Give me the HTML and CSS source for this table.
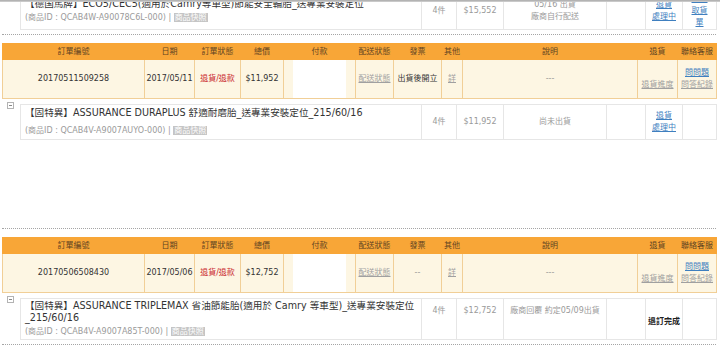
FILE: index.html
```html
<!DOCTYPE html>
<html lang="zh-Hant">
<head>
<meta charset="utf-8">
<title>訂單查詢</title>
<link rel="stylesheet" href="styles.css">
</head>
<body>
<div class="topbar"></div>
<div class="page">

  <section class="order order-first">
    <div class="item">
      <span class="toggle"></span>
      <table class="items">
        <colgroup><col class="c-prod"><col class="c-qty"><col class="c-price"><col class="c-ship"><col class="c-empty"><col class="c-ret"><col class="c-last"></colgroup>
        <tr>
          <td class="prod">
            <div class="title">【德国馬牌】ECO5/CEC5(適用於Camry等車型)節能安全輪胎_送專業安裝定位</div>
            <div class="pid">(商品ID : QCAB4W-A90078C6L-000) | <span class="badge">商品快照</span></div>
          </td>
          <td>4件</td>
          <td>$15,552</td>
          <td>05/16 出貨<br>廠商自行配送</td>
          <td></td>
          <td><a class="lnk">退貨<br>處理中</a></td>
          <td><a class="lnk">取消<br>取貨<br>單</a></td>
        </tr>
      </table>
    </div>
    <div class="sep"></div>
  </section>

  <section class="order">
    <table class="orders">
      <colgroup><col class="o1"><col class="o2"><col class="o3"><col class="o4"><col class="o5"><col class="o6"><col class="o7"><col class="o8"><col class="o9"><col class="o10"><col class="o11"></colgroup>
      <tr class="head">
        <th>訂單編號</th><th>日期</th><th>訂單狀態</th><th>總價</th><th>付款</th><th>配送狀態</th><th>發票</th><th>其他</th><th>說明</th><th>退貨</th><th>聯絡客服</th>
      </tr>
      <tr class="data">
        <td>20170511509258</td>
        <td>2017/05/11</td>
        <td class="red">退貨/退款</td>
        <td>$11,952</td>
        <td class="pay"></td>
        <td><a class="glnk">配送狀態</a></td>
        <td>出貨後開立</td>
        <td><a class="glnk">詳</a></td>
        <td class="muted">---</td>
        <td class="low"><a class="glnk">退貨進度</a></td>
        <td><a class="lnk">問問題</a><br><a class="glnk">問答紀錄</a></td>
      </tr>
    </table>
    <div class="item item-gap">
      <span class="toggle"></span>
      <table class="items">
        <colgroup><col class="c-prod"><col class="c-qty"><col class="c-price"><col class="c-ship"><col class="c-empty"><col class="c-ret"><col class="c-last"></colgroup>
        <tr>
          <td class="prod">
            <div class="title">【固特異】ASSURANCE DURAPLUS 舒適耐磨胎_送專業安裝定位_215/60/16</div>
            <div class="pid">(商品ID : QCAB4V-A9007AUYO-000) | <span class="badge">商品快照</span></div>
          </td>
          <td>4件</td>
          <td>$11,952</td>
          <td>尚未出貨</td>
          <td></td>
          <td><a class="lnk">退貨<br>處理中</a></td>
          <td></td>
        </tr>
      </table>
    </div>
    <div class="spacer"></div>
    <div class="sep"></div>
  </section>

  <section class="order">
    <table class="orders">
      <colgroup><col class="o1"><col class="o2"><col class="o3"><col class="o4"><col class="o5"><col class="o6"><col class="o7"><col class="o8"><col class="o9"><col class="o10"><col class="o11"></colgroup>
      <tr class="head">
        <th>訂單編號</th><th>日期</th><th>訂單狀態</th><th>總價</th><th>付款</th><th>配送狀態</th><th>發票</th><th>其他</th><th>說明</th><th>退貨</th><th>聯絡客服</th>
      </tr>
      <tr class="data">
        <td>20170506508430</td>
        <td>2017/05/06</td>
        <td class="red">退貨/退款</td>
        <td>$12,752</td>
        <td class="pay"></td>
        <td><a class="glnk">配送狀態</a></td>
        <td class="muted">--</td>
        <td><a class="glnk">詳</a></td>
        <td class="muted">---</td>
        <td class="low"><a class="glnk">退貨進度</a></td>
        <td><a class="lnk">問問題</a><br><a class="glnk">問答紀錄</a></td>
      </tr>
    </table>
    <div class="item">
      <span class="toggle"></span>
      <table class="items items-top">
        <colgroup><col class="c-prod"><col class="c-qty"><col class="c-price"><col class="c-ship"><col class="c-empty"><col class="c-ret"><col class="c-last"></colgroup>
        <tr>
          <td class="prod prod-tight">
            <div class="title">【固特異】ASSURANCE TRIPLEMAX 省油節能胎(適用於 Camry 等車型)_送專業安裝定位_215/60/16</div>
            <div class="pid">(商品ID : QCAB4V-A9007A85T-000) | <span class="badge">商品快照</span></div>
          </td>
          <td>4件</td>
          <td>$12,752</td>
          <td>廠商回覆 約定05/09出貨</td>
          <td></td>
          <td class="done">退訂完成</td>
          <td></td>
        </tr>
      </table>
    </div>
    <div class="sep"></div>
  </section>

</div>
</body>
</html>
```

FILE: styles.css
```css
html, body {
  margin: 0;
  background: #fff;
}

body {
  font-family: "DejaVu Sans", "Noto Sans CJK TC", sans-serif;
  font-size: 8px;
  line-height: 12px;
  color: #333;
  overflow: hidden;
}

.topbar {
  position: fixed;
  top: 0;
  left: 0;
  right: 0;
  height: 2px;
  background: linear-gradient(#a8a8a8, #d4d4d4);
  z-index: 2;
}

.page {
  width: 714px;
  padding-left: 2px;
}

.order-first {
  margin-top: -8px;
}

/* product rows */
.item {
  display: flex;
  align-items: flex-start;
  margin-top: 5px;
}

.order-first .item {
  margin-top: 0;
}

.toggle {
  flex: none;
  position: relative;
  width: 5px;
  height: 5px;
  border: 1px solid #b3b3b3;
  margin: -2px 6px 0 5px;
  background: #fff;
}

.toggle::after {
  content: "";
  position: absolute;
  left: 1px;
  top: 2px;
  width: 3px;
  height: 1px;
  background: #888;
}

.items {
  width: 696px;
  border-collapse: collapse;
  table-layout: fixed;
  background: #fff;
}

.c-prod { width: 401px; }
.c-qty { width: 35px; }
.c-price { width: 47px; }
.c-ship { width: 103px; }
.c-empty { width: 39px; }
.c-ret { width: 37px; }
.c-last { width: 34px; }

.items td {
  border: 1px solid #e6e6e6;
  padding: 0 2px;
  text-align: center;
  vertical-align: middle;
  color: #9a9a9a;
}

.items td.prod {
  text-align: left;
  padding: 2px 4px;
  color: #333;
}

.items td.prod-tight {
  padding: 1px 4px;
}

.items-top td {
  vertical-align: top;
  padding-top: 6px;
}

.items-top td.prod {
  vertical-align: middle;
  padding-top: 1px;
}

.items td.done {
  padding-top: 17px;
  color: #222;
  font-weight: bold;
}

.title {
  font-size: 9.6px;
  line-height: 12px;
  margin-bottom: 2px;
  color: #333;
}

.item-gap .title {
  margin-bottom: 6px;
}

.pid {
  color: #9a9a9a;
  line-height: 12px;
}

.badge {
  background: #c5c5c5;
  color: #fff;
  padding: 0 1px;
}

.lnk {
  color: #3f7fbf;
  text-decoration: underline;
}

.glnk {
  color: #a0a0a0;
  text-decoration: underline;
}

/* separators */
.sep {
  border-top: 1px dotted #a5a5a5;
  margin: 4px 0 8px;
}

.spacer {
  height: 84px;
}

/* order summary table */
.orders {
  width: 714px;
  border-collapse: collapse;
  table-layout: fixed;
  border: 1px solid #f2a33b;
}

.o1 { width: 142px; }
.o2 { width: 50px; }
.o3 { width: 46px; }
.o4 { width: 43px; }
.o5 { width: 72px; }
.o6 { width: 38px; }
.o7 { width: 48px; }
.o8 { width: 21px; }
.o9 { width: 175px; }
.o10 { width: 40px; }
.o11 { width: 39px; }

.orders tr.head {
  height: 16px;
}

.orders th {
  background: #f8a637;
  border: 1px solid #f8a637;
  color: #5e4322;
  font-weight: normal;
  padding: 0;
  line-height: 12px;
  white-space: nowrap;
}

.orders tr.data {
  background: #fdf6e3;
  height: 39px;
}

.orders td {
  border: 1px solid #f1cf97;
  padding: 0 1px;
  text-align: center;
  vertical-align: middle;
  white-space: nowrap;
  color: #333;
}

.orders td.pay {
  background: #fff;
  background-clip: content-box;
  padding: 0 10px 0 9px;
}

.orders td.red {
  color: #c9252b;
}

.orders td.muted {
  color: #9a9a9a;
}

.orders td.low {
  padding-top: 12px;
}
```
